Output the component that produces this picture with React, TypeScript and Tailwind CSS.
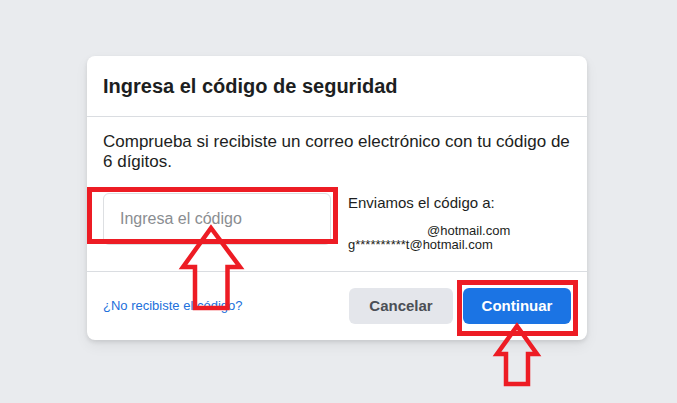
import React from "react";

const font = { fontFamily: '"Liberation Sans", Arial, Helvetica, sans-serif' };

// Red callouts drawn over the dialog
function Callouts() {
  return (
    <svg
      className="pointer-events-none absolute left-0 top-0"
      width={677}
      height={403}
      viewBox="0 0 677 403"
      fill="none"
      stroke="#ed1c24"
      strokeWidth={5}>
      <rect x={89.5} y={189.5} width={246} height={52} />
      <rect x={459.5} y={282.5} width={116} height={51} />
      <polygon
        strokeWidth={4.5}
        strokeLinejoin="miter"
        points="211,228 183,267 195,267 195,308 227.5,308 227.5,267 240,267"
      />
      <polygon
        strokeWidth={4.5}
        strokeLinejoin="miter"
        points="517,326 497,354 506,354 506,384 528,384 528,354 537,354"
      />
    </svg>
  );
}

export default function App() {
  return (
    <div
      className="relative h-[403px] w-[677px] overflow-hidden bg-[#e9ebee] pl-[87px] pt-[56px]"
      style={font}>
      <div className="w-[500px] rounded-lg bg-white shadow-[0_2px_4px_rgba(0,0,0,0.1),0_6px_14px_rgba(0,0,0,0.06)]">
        {/* Header */}
        <div className="flex h-[61px] items-center border-b border-[#dadde1] px-4">
          <h2 className="text-[20px] font-bold leading-6 text-[#1c1e21]">
            Ingresa el código de seguridad
          </h2>
        </div>

        {/* Body */}
        <div className="px-4 pb-[19px] pt-[15px]">
          <p className="text-[17px] leading-5 text-[#1c1e21]">
            Comprueba si recibiste un correo electrónico con tu código de 6 dígitos.
          </p>
          <div className="mt-[21px] flex gap-[17px]">
            <input
              type="text"
              placeholder="Ingresa el código"
              className="h-[52px] w-[228px] rounded-md border border-[#dddfe2] px-4 text-[16px] text-[#1c1e21] outline-none placeholder:text-[#8a8d91]"
              style={font}
            />
            <div className="text-[#1c1e21]">
              <div className="text-[15px] leading-5">Enviamos el código a:</div>
              <div className="mt-[11px] text-[13px] leading-[14px]">
                <div className="pl-[79px]">@hotmail.com</div>
                <div>g**********t@hotmail.com</div>
              </div>
            </div>
          </div>
        </div>

        {/* Footer */}
        <div className="flex items-center justify-between border-t border-[#dadde1] px-4 py-4">
          <a href="#" className="text-[13px] text-[#216fdb]">
            ¿No recibiste el código?
          </a>
          <div className="flex gap-[10px]">
            <button
              type="button"
              className="h-9 w-[104px] rounded-md bg-[#e4e6eb] text-[15px] font-bold text-[#4b4f56]"
              style={font}>
              Cancelar
            </button>
            <button
              type="button"
              className="h-9 w-[108px] rounded-md bg-[#1b74e4] text-[15px] font-bold text-white"
              style={font}>
              Continuar
            </button>
          </div>
        </div>
      </div>
      <Callouts />
    </div>
  );
}
